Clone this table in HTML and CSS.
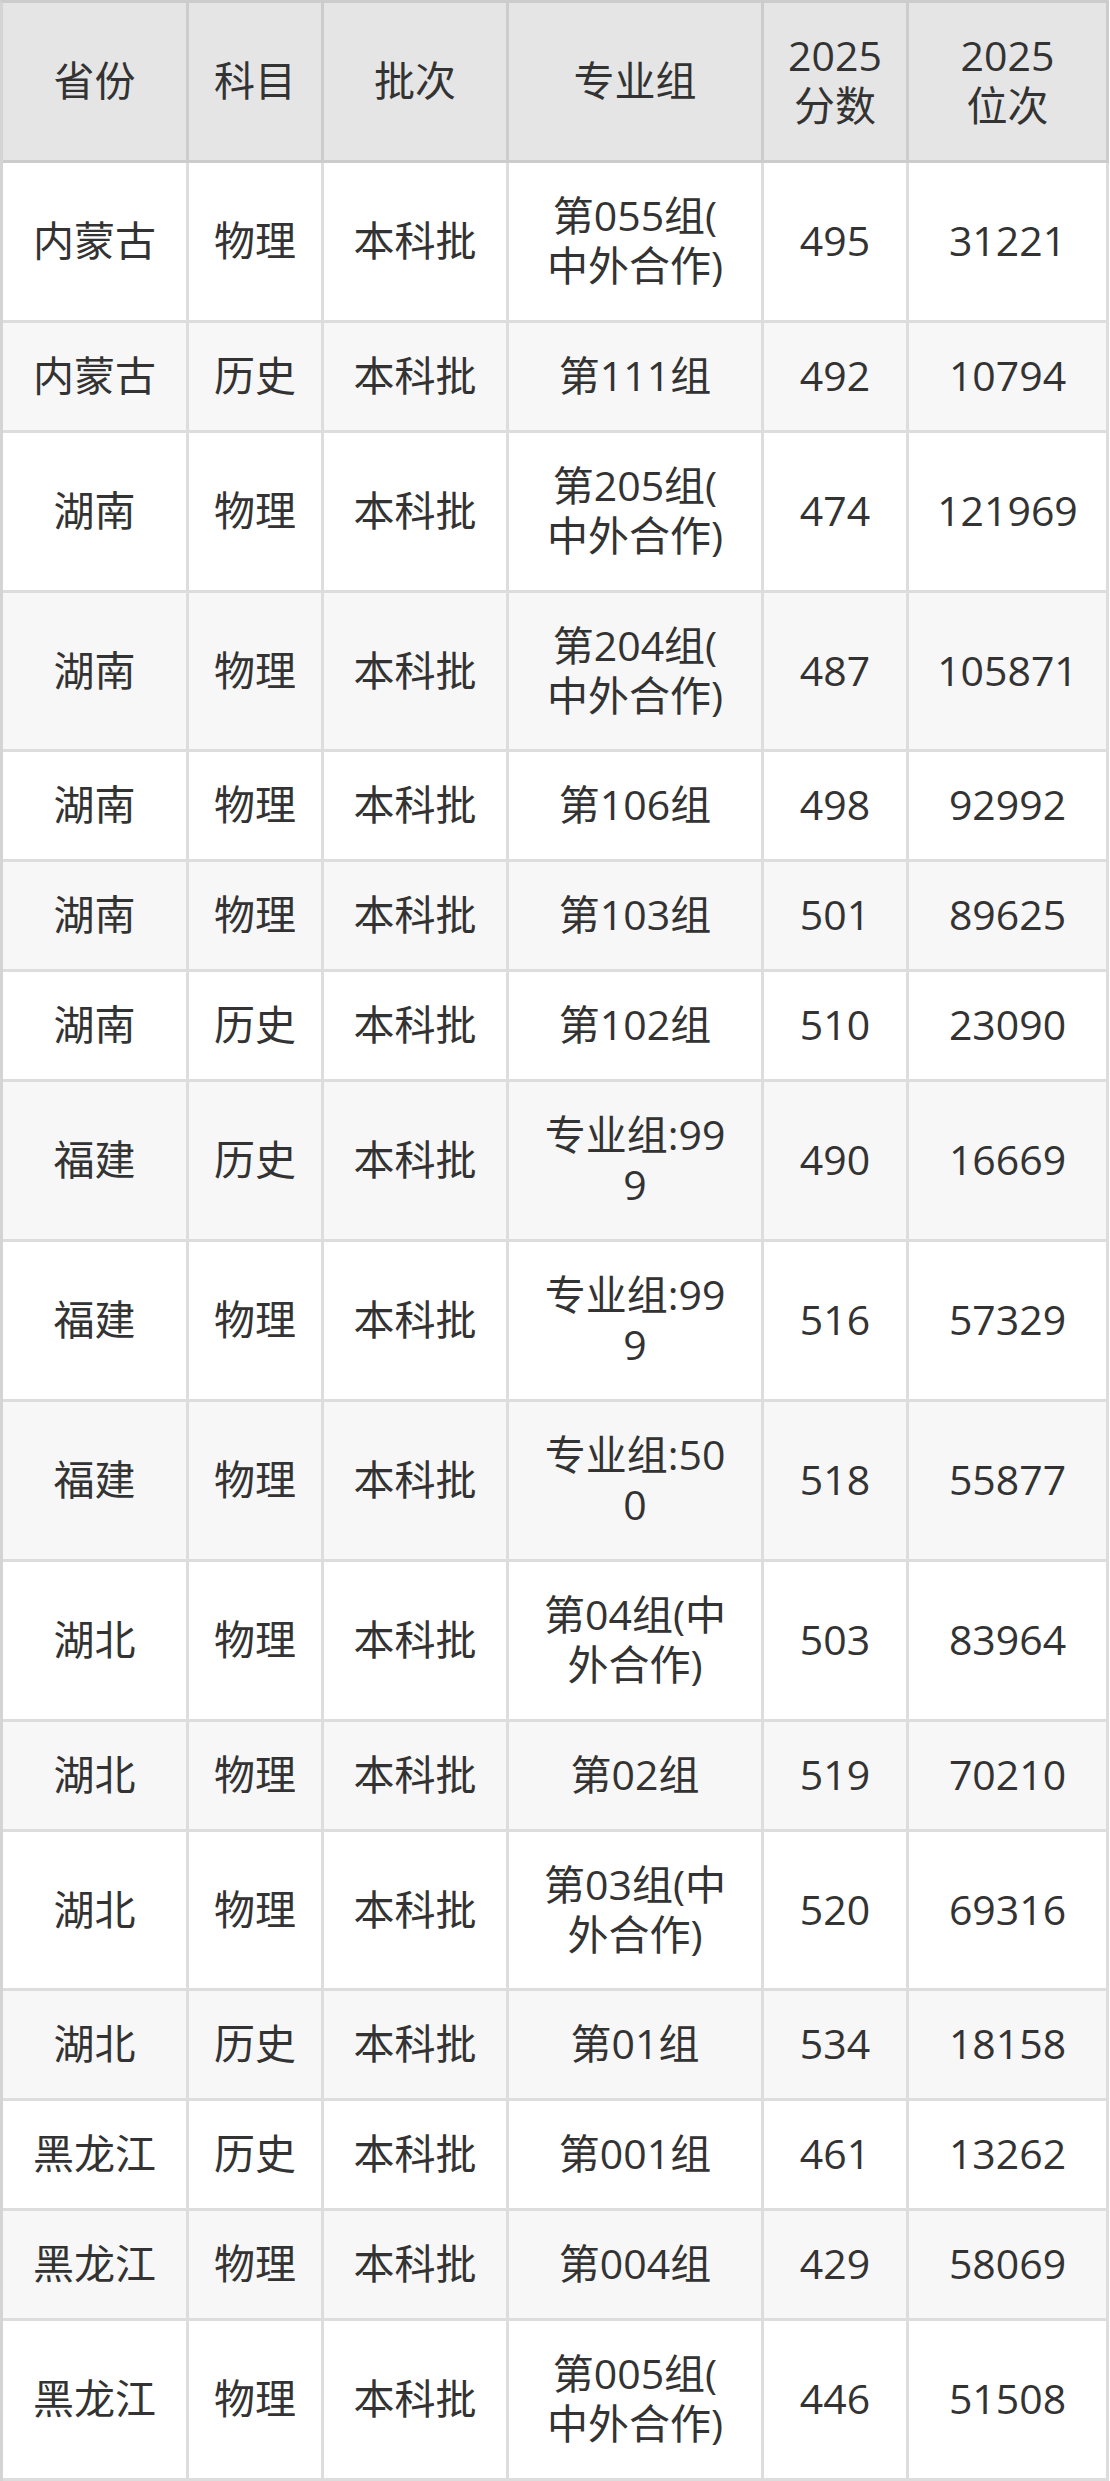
FILE: index.html
```html
<!DOCTYPE html>
<html lang="zh-CN">
<head>
<meta charset="utf-8">
<title>分数线</title>
<link rel="stylesheet" href="styles.css">
</head>
<body>
<table class="score-table">
  <colgroup>
    <col class="c-prov">
    <col class="c-subj">
    <col class="c-batch">
    <col class="c-group">
    <col class="c-score">
    <col class="c-rank">
  </colgroup>
  <thead>
    <tr>
      <th>省份</th>
      <th>科目</th>
      <th>批次</th>
      <th>专业组</th>
      <th>2025<br>分数</th>
      <th>2025<br>位次</th>
    </tr>
  </thead>
  <tbody>
    <tr><td>内蒙古</td><td>物理</td><td>本科批</td><td class="grp">第055组(中外合作)</td><td>495</td><td>31221</td></tr>
    <tr><td>内蒙古</td><td>历史</td><td>本科批</td><td class="grp">第111组</td><td>492</td><td>10794</td></tr>
    <tr><td>湖南</td><td>物理</td><td>本科批</td><td class="grp">第205组(中外合作)</td><td>474</td><td>121969</td></tr>
    <tr><td>湖南</td><td>物理</td><td>本科批</td><td class="grp">第204组(中外合作)</td><td>487</td><td>105871</td></tr>
    <tr><td>湖南</td><td>物理</td><td>本科批</td><td class="grp">第106组</td><td>498</td><td>92992</td></tr>
    <tr><td>湖南</td><td>物理</td><td>本科批</td><td class="grp">第103组</td><td>501</td><td>89625</td></tr>
    <tr><td>湖南</td><td>历史</td><td>本科批</td><td class="grp">第102组</td><td>510</td><td>23090</td></tr>
    <tr><td>福建</td><td>历史</td><td>本科批</td><td class="grp">专业组:999</td><td>490</td><td>16669</td></tr>
    <tr><td>福建</td><td>物理</td><td>本科批</td><td class="grp">专业组:999</td><td>516</td><td>57329</td></tr>
    <tr><td>福建</td><td>物理</td><td>本科批</td><td class="grp">专业组:500</td><td>518</td><td>55877</td></tr>
    <tr><td>湖北</td><td>物理</td><td>本科批</td><td class="grp">第04组(中外合作)</td><td>503</td><td>83964</td></tr>
    <tr><td>湖北</td><td>物理</td><td>本科批</td><td class="grp">第02组</td><td>519</td><td>70210</td></tr>
    <tr><td>湖北</td><td>物理</td><td>本科批</td><td class="grp">第03组(中外合作)</td><td>520</td><td>69316</td></tr>
    <tr><td>湖北</td><td>历史</td><td>本科批</td><td class="grp">第01组</td><td>534</td><td>18158</td></tr>
    <tr><td>黑龙江</td><td>历史</td><td>本科批</td><td class="grp">第001组</td><td>461</td><td>13262</td></tr>
    <tr><td>黑龙江</td><td>物理</td><td>本科批</td><td class="grp">第004组</td><td>429</td><td>58069</td></tr>
    <tr><td>黑龙江</td><td>物理</td><td>本科批</td><td class="grp">第005组(中外合作)</td><td>446</td><td>51508</td></tr>
  </tbody>
</table>
</body>
</html>
```

FILE: styles.css
```css
html, body {
  margin: 0;
  padding: 0;
  background: #ffffff;
}

.score-table {
  border-collapse: separate;
  border-spacing: 0;
  table-layout: fixed;
  width: 1109px;
  border-top: 3px solid #cccccc;
  border-left: 3px solid #d4d4d4;
  font-family: "Open Sans", "Noto Sans CJK SC", sans-serif;
  font-size: 41px;
  line-height: 50px;
  color: #333333;
}

.c-prov  { width: 186px; }
.c-subj  { width: 135px; }
.c-batch { width: 185px; }
.c-group { width: 255px; }
.c-score { width: 145px; }
.c-rank  { width: 200px; }

.score-table th,
.score-table td {
  box-sizing: border-box;
  padding: 27px 6px 29.9px;
  text-align: center;
  vertical-align: middle;
  font-weight: normal;
  border-right: 3px solid #dddddd;
  border-bottom: 3px solid #dddddd;
}

.score-table th {
  background: #e5e5e5;
  border-right-color: #cccccc;
  border-bottom-color: #cccccc;
}

.score-table tbody tr:nth-child(even) td {
  background: #f7f7f7;
}

.score-table td.grp {
  padding-left: 32px;
  padding-right: 32px;
  line-break: anywhere;
  word-break: break-all;
}
```
